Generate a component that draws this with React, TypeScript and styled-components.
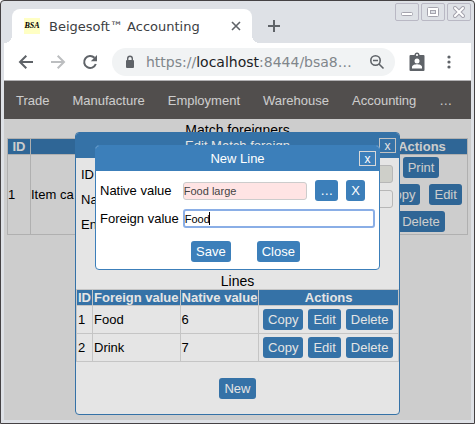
import React from "react";
import styled, { createGlobalStyle } from "styled-components";

const sans = `"Liberation Sans", Arial, sans-serif`;

const GlobalStyle = createGlobalStyle`
  *, *::before, *::after { box-sizing: border-box; }
  html, body { height: 100%; }
  body { margin: 0; font-family: ${sans}; font-size: 13px; line-height: 15px; color: #000; }
  #root { height: 100%; }
`;

const Window = styled.div`
  height: 100%;
  display: flex;
  flex-direction: column;
  padding: 0 3px 3px;
  background: #dee1e6;
  border: 1px solid #454244;
  border-radius: 4px 4px 0 0;
`;

const TabStrip = styled.header`
  display: flex;
  height: 42px;
  padding-left: 8px;
`;

const Tab = styled.div`
  display: flex;
  align-items: center;
  width: 240px;
  height: 34px;
  margin-top: 8px;
  padding: 0 10px 0 12px;
  border-radius: 8px 8px 0 0;
  background: #fff;
  position: relative;
  &::before, &::after {
    content: "";
    position: absolute;
    bottom: 0;
    width: 8px;
    height: 8px;
  }
  &::before { left: -8px; background: radial-gradient(circle at 0 0, #dee1e6 8px, #fff 8px); }
  &::after { right: -8px; background: radial-gradient(circle at 100% 0, #dee1e6 8px, #fff 8px); }
`;

const Favicon = styled.span`
  width: 16px;
  height: 16px;
  background: #ffffc4;
  color: #000;
  text-align: center;
  font: italic bold 8px/16px "Liberation Serif", serif;
`;

const TabTitle = styled.span`
  flex: 1;
  margin-left: 9px;
  font-family: "DejaVu Sans", sans-serif;
  font-size: 13px;
  color: #3c4043;
  white-space: nowrap;
`;

const IconButton = styled.button<{ $w?: number }>`
  display: flex;
  align-items: center;
  justify-content: center;
  flex: none;
  width: ${(p) => p.$w ?? 20}px;
  height: 20px;
  padding: 0;
  border: 0;
  background: none;
  color: #5f6368;
`;

const NewTabSlot = styled.div`
  padding: 15px 0 0 12px;
`;

const WindowButtons = styled.div`
  display: flex;
  gap: 2px;
  margin-left: auto;
  padding-top: 2px;
`;

const WindowButton = styled.button`
  display: flex;
  align-items: center;
  justify-content: center;
  width: 24px;
  height: 18px;
  padding: 0;
  border: 1px solid #b9b8c4;
  border-radius: 2px;
  background: #dee1e6;
`;

const Toolbar = styled.div`
  display: flex;
  align-items: center;
  height: 38px;
  padding: 0 12px;
  background: #fff;
  border-bottom: 1px solid #b2b1b3;
`;

const NavButtons = styled.div`
  display: flex;
  gap: 12px;
  margin-right: 12px;
`;

const AddressBar = styled.div`
  display: flex;
  align-items: center;
  flex: 1;
  height: 28px;
  padding: 0 8px 0 12px;
  border-radius: 14px;
  background: #f1f3f4;
`;

const Address = styled.span`
  flex: 1;
  margin-left: 10px;
  font-family: "DejaVu Sans", sans-serif;
  font-size: 14px;
  line-height: 20px;
  color: #80868b;
  white-space: nowrap;
  b { font-weight: 400; color: #202124; }
`;

const ToolbarEnd = styled.div`
  display: flex;
  gap: 12px;
  margin-left: 12px;
`;

const Page = styled.main`
  position: relative;
  flex: 1;
  background: #fff;
`;

const Menu = styled.nav`
  display: flex;
  gap: 23px;
  height: 38px;
  padding: 0 12px;
  align-items: center;
  background: #666160;
`;

const MenuLink = styled.a`
  color: #fff;
  text-decoration: none;
`;

const Caption = styled.h2`
  margin: 0;
  text-align: center;
  font-size: 14px;
  line-height: 16px;
  font-weight: 400;
`;

const PageBody = styled.div`
  padding: 3px 3px 0;
`;

const Table = styled.table`
  width: 100%;
  border-collapse: collapse;
`;

const Th = styled.th<{ $w?: number }>`
  width: ${(p) => (p.$w ? `${p.$w}px` : "auto")};
  padding: 0 1px;
  border: 1px solid #dcdcdc;
  background: #3c7fba;
  color: #fff;
  white-space: nowrap;
`;

const Td = styled.td<{ $tight?: boolean }>`
  padding: ${(p) => (p.$tight ? "2px 0" : "3px 1px")};
  border: 1px solid #dcdcdc;
`;

const Actions = styled.div<{ $wide?: boolean }>`
  display: flex;
  flex-wrap: wrap;
  justify-content: center;
  gap: 6px ${(p) => (p.$wide ? 9 : 5)}px;
  padding: 0 ${(p) => (p.$wide ? 4 : 1)}px 0 ${(p) => (p.$wide ? 2 : 0)}px;
`;

const Button = styled.button`
  height: 21px;
  padding: 0 5px;
  border: 0;
  border-radius: 3px;
  background: #3c7fba;
  color: #fff;
  font: 13px/21px ${sans};
`;

const Layer = styled.div<{ $offset: number; $inset: number }>`
  position: absolute;
  inset: 0;
  display: flex;
  align-items: flex-start;
  padding: ${(p) => `${p.$offset}px ${p.$inset}px 0`};
  background: rgba(0, 0, 0, 0.1);
`;

const Dialog = styled.section`
  flex: 1;
  border: 1px solid #3c7fba;
  border-radius: 4px;
  background: #fff;
  overflow: hidden;
`;

const DialogHead = styled.header`
  display: flex;
  align-items: center;
  height: 25px;
  padding: 0 3px 0 20px;
  background: #3c7fba;
  color: #fff;
`;

const DialogTitle = styled.h2`
  flex: 1;
  margin: 0;
  font-size: 13px;
  font-weight: 400;
  text-align: center;
`;

const CloseBox = styled.button`
  width: 17px;
  height: 15px;
  padding: 0;
  border: 1px solid #d8d8d8;
  background: none;
  color: #fff;
  font: 12px/12px ${sans};
`;

const EditForm = styled.form`
  display: grid;
  grid-template-columns: auto 1fr;
  grid-auto-rows: 18px;
  gap: 7px 12px;
  align-items: center;
  padding: 7px 6px 40px 5px;
`;

const LineForm = styled.form`
  display: grid;
  grid-template-columns: auto 1fr;
  gap: 8px 4px;
  align-items: center;
  padding: 9px 4px 0;
`;

const Picker = styled.div`
  display: flex;
  align-items: center;
  gap: 8px;
  padding: 0 10px 0 0;
`;

const TextField = styled.input<{ $tone?: string }>`
  width: 100%;
  min-width: 0;
  height: 18px;
  padding: 0;
  border: 1px solid #cccccc;
  border-radius: 3px;
  background: ${(p) => p.$tone ?? "#fff"};
  color: #444;
  font: 11px/14px ${sans};
`;

const FocusField = styled(TextField)`
  height: 19px;
  border: 2px solid #8aaee6;
  background: linear-gradient(#000, #000) 24px center / 1px 13px no-repeat #fff;
  color: #000;
  outline: none;
`;

const Footer = styled.footer<{ $pad: string }>`
  display: flex;
  justify-content: center;
  gap: 26px;
  padding: ${(p) => p.$pad};
`;

const menu = ["Trade", "Manufacture", "Employment", "Warehouse", "Accounting", "…"];
const lines = [
  { id: 1, foreign: "Food", native: 6 },
  { id: 2, foreign: "Drink", native: 7 },
];

function Browser() {
  return (
    <>
      <TabStrip>
        <Tab>
          <Favicon>BSA</Favicon>
          <TabTitle>Beigesoft™ Accounting</TabTitle>
          <IconButton $w={12} aria-label="Close tab">
            <svg width="10" height="10" viewBox="0 0 10 10" stroke="currentColor" strokeWidth="1.6"><path d="M1 1l8 8M9 1l-8 8" /></svg>
          </IconButton>
        </Tab>
        <NewTabSlot>
          <IconButton aria-label="New tab">
            <svg width="12" height="12" viewBox="0 0 12 12" stroke="currentColor" strokeWidth="2"><path d="M6 0v12M0 6h12" /></svg>
          </IconButton>
        </NewTabSlot>
        <WindowButtons>
          <WindowButton aria-label="Minimize">
            <svg width="12" height="12" viewBox="0 0 12 12"><rect x="0.5" y="6.5" width="11" height="3" rx="1" fill="#fff" stroke="#a5a4ae" /></svg>
          </WindowButton>
          <WindowButton aria-label="Maximize">
            <svg width="12" height="12" viewBox="0 0 12 12" fill="none"><rect x="0.5" y="1.5" width="11" height="9" rx="1" fill="#fff" stroke="#a5a4ae" /><rect x="3.5" y="4.5" width="5" height="3" fill="#dee1e6" stroke="#a5a4ae" /></svg>
          </WindowButton>
          <WindowButton aria-label="Close">
            <svg width="12" height="12" viewBox="0 0 12 12" strokeLinecap="round"><path d="M2 2l8 8M10 2l-8 8" stroke="#a5a4ae" strokeWidth="4" /><path d="M2 2l8 8M10 2l-8 8" stroke="#fff" strokeWidth="2" /></svg>
          </WindowButton>
        </WindowButtons>
      </TabStrip>
      <Toolbar>
        <NavButtons>
          <IconButton aria-label="Back">
            <svg width="20" height="20" viewBox="0 0 20 20" fill="none" stroke="currentColor" strokeWidth="2"><path d="M17 10H4.500M10.300 3.700L4 10l6.300 6.300" /></svg>
          </IconButton>
          <IconButton aria-label="Forward">
            <svg width="20" height="20" viewBox="0 0 20 20" fill="none" stroke="#bcbec0" strokeWidth="2"><path d="M3 10h12.500M9.700 3.700L16 10l-6.300 6.300" /></svg>
          </IconButton>
          <IconButton aria-label="Reload">
            <svg width="20" height="20" viewBox="0 0 20 20"><path d="M14.5 5.8A6 6 0 1 0 15.800 12" fill="none" stroke="currentColor" strokeWidth="2" /><path d="M17 3v6.200h-6.200z" fill="currentColor" /></svg>
          </IconButton>
        </NavButtons>
        <AddressBar>
          <svg width="12" height="14" viewBox="0 0 12 14"><rect x="2" y="5" width="8" height="8" rx="1" fill="#5f6368" /><path d="M3.7 5V3.5a2.3 2.3 0 0 1 4.6 0V5" fill="none" stroke="#5f6368" strokeWidth="1.4" /></svg>
          <Address>https://<b>localhost</b>:8444/bsa8…</Address>
          <IconButton aria-label="Zoom">
            <svg width="16" height="16" viewBox="0 0 16 16" fill="none" stroke="currentColor" strokeWidth="1.6"><circle cx="6.5" cy="6.5" r="4.7" /><path d="M10 10l4.5 4.5M4 6.5h5" /></svg>
          </IconButton>
        </AddressBar>
        <ToolbarEnd>
          <IconButton aria-label="Profile">
            <svg width="16" height="20" viewBox="0 0 16 20"><rect x="0.5" y="3" width="15" height="16" rx="1" fill="#5f6368" /><circle cx="8" cy="3" r="1.8" fill="#fff" stroke="#5f6368" strokeWidth="1.4" /><circle cx="8" cy="9" r="2.5" fill="#fff" /><path d="M3 16.500v-1.500c0-2 3.500-2.700 5-2.700s5 .7 5 2.700v1.500z" fill="#fff" /></svg>
          </IconButton>
          <IconButton aria-label="Menu">
            <svg width="4" height="14" viewBox="0 0 4 14" fill="currentColor"><circle cx="2" cy="2" r="1.600" /><circle cx="2" cy="7" r="1.600" /><circle cx="2" cy="12" r="1.600" /></svg>
          </IconButton>
        </ToolbarEnd>
      </Toolbar>
    </>
  );
}

function RowActions() {
  return (
    <Actions>
      <Button>Copy</Button>
      <Button>Edit</Button>
      <Button>Delete</Button>
    </Actions>
  );
}

function EditDialog() {
  return (
    <Dialog>
      <DialogHead>
        <DialogTitle>Edit Match foreign</DialogTitle>
        <CloseBox aria-label="Close dialog">x</CloseBox>
      </DialogHead>
      <EditForm>
        <label htmlFor="mf-id">ID</label>
        <TextField id="mf-id" $tone="#e6e7e0" disabled />
        <label htmlFor="mf-name">Name</label>
        <TextField id="mf-name" />
        <span>Entity</span>
        <span />
      </EditForm>
      <Caption>Lines</Caption>
      <Table>
        <thead>
          <tr>
            <Th>ID</Th>
            <Th>Foreign value</Th>
            <Th>Native value</Th>
            <Th $w={140}>Actions</Th>
          </tr>
        </thead>
        <tbody>
          {lines.map((l) => (
            <tr key={l.id}>
              <Td>{l.id}</Td>
              <Td>{l.foreign}</Td>
              <Td>{l.native}</Td>
              <Td><RowActions /></Td>
            </tr>
          ))}
        </tbody>
      </Table>
      <Footer $pad="16px 0 15px"><Button>New</Button></Footer>
    </Dialog>
  );
}

function LineDialog() {
  return (
    <Dialog>
      <DialogHead>
        <DialogTitle>New Line</DialogTitle>
        <CloseBox aria-label="Close dialog">x</CloseBox>
      </DialogHead>
      <LineForm>
        <label htmlFor="native">Native value</label>
        <Picker>
          <TextField id="native" $tone="#ffe4e4" defaultValue="Food large" readOnly />
          <Button type="button">…</Button>
          <Button type="button">X</Button>
        </Picker>
        <label htmlFor="foreign">Foreign value</label>
        <FocusField id="foreign" defaultValue="Food" />
      </LineForm>
      <Footer $pad="13px 0 7px 16px"><Button>Save</Button><Button>Close</Button></Footer>
    </Dialog>
  );
}

export default function App() {
  return (
    <Window>
      <GlobalStyle />
      <Browser />
      <Page>
        <Menu>
          {menu.map((m) => <MenuLink href="#" key={m}>{m}</MenuLink>)}
        </Menu>
        <PageBody>
          <Caption>Match foreigners</Caption>
          <Table>
            <thead>
              <tr>
                <Th $w={23}>ID</Th>
                <Th>Name</Th>
                <Th $w={91}>Actions</Th>
              </tr>
            </thead>
            <tbody>
              <tr>
                <Td $tight>1</Td>
                <Td $tight>Item ca</Td>
                <Td $tight>
                  <Actions $wide>
                    <Button>Print</Button>
                    <Button>Copy</Button>
                    <Button>Edit</Button>
                    <Button>Delete</Button>
                  </Actions>
                </Td>
              </tr>
            </tbody>
          </Table>
        </PageBody>
        <Layer $offset={51} $inset={71}><EditDialog /></Layer>
        <Layer $offset={64} $inset={91}><LineDialog /></Layer>
      </Page>
    </Window>
  );
}
